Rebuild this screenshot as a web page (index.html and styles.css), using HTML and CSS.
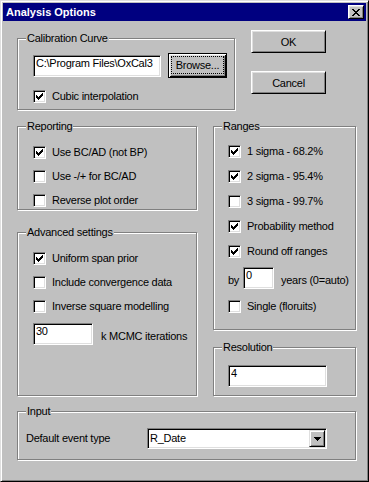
FILE: index.html
```html
<!DOCTYPE html>
<html>
<head>
    <title>Analysis Options</title>
    <meta charset="UTF-8">
    <meta name="viewport" content="width=device-width, initial-scale=1.0">
    <link rel="stylesheet" href="styles.css">
</head>

<body>
<div class="window">

  <!-- Title bar -->
  <div class="titlebar">
    <span class="title">Analysis Options</span>
    <button class="close-button">
      <svg width="8" height="7" viewBox="0 0 8 7"><path d="M0 0h2v1h-2zM6 0h2v1h-2zM1 1h2v1h-2zM5 1h2v1h-2zM2 2h4v1h-4zM3 3h2v1h-2zM2 4h4v1h-4zM1 5h2v1h-2zM5 5h2v1h-2zM0 6h2v1h-2zM6 6h2v1h-2z"/></svg>
    </button>
  </div>

  <div class="client">

    <div class="top-row">
      <div class="group calib">
        <span class="group-label">Calibration Curve</span>
        <div class="file-row">
          <input class="edit file-edit" type="text" value="C:\Program Files\OxCal3">
          <button class="btn btn-default browse"><span class="focus">Browse...</span></button>
        </div>
        <div class="check-row">
          <span class="check"><svg width="7" height="7" viewBox="0 0 7 7"><path d="M6 0h1v1h-1zM5 1h2v1h-2zM0 2h1v1h-1zM4 2h3v1h-3zM0 3h2v1h-2zM3 3h3v1h-3zM0 4h5v1h-5zM1 5h3v1h-3zM2 6h1v1h-1z"/></svg></span>
          Cubic interpolation
        </div>
      </div>
      <div class="dialog-buttons">
        <button class="btn">OK</button>
        <button class="btn">Cancel</button>
      </div>
    </div>

    <div class="mid-row">
      <div class="col left-col">
        <div class="group reporting">
          <span class="group-label">Reporting</span>
          <div class="check-row">
            <span class="check"><svg width="7" height="7" viewBox="0 0 7 7"><path d="M6 0h1v1h-1zM5 1h2v1h-2zM0 2h1v1h-1zM4 2h3v1h-3zM0 3h2v1h-2zM3 3h3v1h-3zM0 4h5v1h-5zM1 5h3v1h-3zM2 6h1v1h-1z"/></svg></span>
            Use BC/AD (not BP)
          </div>
          <div class="check-row"><span class="check"></span>Use -/+ for BC/AD</div>
          <div class="check-row"><span class="check"></span>Reverse plot order</div>
        </div>

        <div class="group advanced">
          <span class="group-label">Advanced settings</span>
          <div class="check-row">
            <span class="check"><svg width="7" height="7" viewBox="0 0 7 7"><path d="M6 0h1v1h-1zM5 1h2v1h-2zM0 2h1v1h-1zM4 2h3v1h-3zM0 3h2v1h-2zM3 3h3v1h-3zM0 4h5v1h-5zM1 5h3v1h-3zM2 6h1v1h-1z"/></svg></span>
            Uniform span prior
          </div>
          <div class="check-row"><span class="check"></span>Include convergence data</div>
          <div class="check-row"><span class="check"></span>Inverse square modelling</div>
          <div class="field-row iter-row">
            <input class="edit iter-edit" type="text" value="30">
            <span class="iter-label">k MCMC iterations</span>
          </div>
        </div>
      </div>

      <div class="col right-col">
        <div class="group ranges">
          <span class="group-label">Ranges</span>
          <div class="check-row">
            <span class="check"><svg width="7" height="7" viewBox="0 0 7 7"><path d="M6 0h1v1h-1zM5 1h2v1h-2zM0 2h1v1h-1zM4 2h3v1h-3zM0 3h2v1h-2zM3 3h3v1h-3zM0 4h5v1h-5zM1 5h3v1h-3zM2 6h1v1h-1z"/></svg></span>
            1 sigma - 68.2%
          </div>
          <div class="check-row">
            <span class="check"><svg width="7" height="7" viewBox="0 0 7 7"><path d="M6 0h1v1h-1zM5 1h2v1h-2zM0 2h1v1h-1zM4 2h3v1h-3zM0 3h2v1h-2zM3 3h3v1h-3zM0 4h5v1h-5zM1 5h3v1h-3zM2 6h1v1h-1z"/></svg></span>
            2 sigma - 95.4%
          </div>
          <div class="check-row"><span class="check"></span>3 sigma - 99.7%</div>
          <div class="check-row">
            <span class="check"><svg width="7" height="7" viewBox="0 0 7 7"><path d="M6 0h1v1h-1zM5 1h2v1h-2zM0 2h1v1h-1zM4 2h3v1h-3zM0 3h2v1h-2zM3 3h3v1h-3zM0 4h5v1h-5zM1 5h3v1h-3zM2 6h1v1h-1z"/></svg></span>
            Probability method
          </div>
          <div class="check-row">
            <span class="check"><svg width="7" height="7" viewBox="0 0 7 7"><path d="M6 0h1v1h-1zM5 1h2v1h-2zM0 2h1v1h-1zM4 2h3v1h-3zM0 3h2v1h-2zM3 3h3v1h-3zM0 4h5v1h-5zM1 5h3v1h-3zM2 6h1v1h-1z"/></svg></span>
            Round off ranges
          </div>
          <div class="field-row by-row">
            <span class="by-label">by</span>
            <input class="edit by-edit" type="text" value="0">
            <span class="years-label">years (0=auto)</span>
          </div>
          <div class="check-row single-row"><span class="check"></span>Single (floruits)</div>
        </div>

        <div class="group resolution">
          <span class="group-label">Resolution</span>
          <input class="edit res-edit" type="text" value="4">
        </div>
      </div>
    </div>

    <div class="group input-group">
      <span class="group-label">Input</span>
      <span class="event-label">Default event type</span>
      <div class="combo">
        <span class="combo-text">R_Date</span>
        <span class="combo-button">
          <svg width="7" height="4" viewBox="0 0 7 4"><path d="M0 0h7v1h-1v1h-1v1h-1v1h-1v-1h-1v-1h-1v-1h-1z"/></svg>
        </span>
      </div>
    </div>

  </div>
</div>
</body>
</html>
```

FILE: styles.css
```css
/* Basic Reset */
* {
    box-sizing: border-box;
    margin: 0;
    padding: 0;
}

html, body {
    width: 369px;
    height: 482px;
    background-color: #c0c0c0;
    overflow: hidden;
}

body {
    font-family: 'Liberation Sans', Arial, sans-serif;
    font-size: 11px;
    letter-spacing: -0.25px;
    color: #000;
}

/* Window frame */
.window {
    width: 369px;
    height: 482px;
    border: 1px solid;
    border-color: #dfdfdf #000 #000 #dfdfdf;
    box-shadow: inset 1px 1px #fff, inset -1px -1px #808080;
    padding: 2px;
}

/* Title bar */
.titlebar {
    height: 18px;
    background-color: #000080;
    display: flex;
    align-items: center;
    justify-content: space-between;
    padding: 0 2px 0 3px;
}

.title {
    color: #fff;
    font-weight: bold;
    letter-spacing: 0;
    line-height: 13px;
}

.close-button {
    width: 16px;
    height: 14px;
    background-color: #c0c0c0;
    border: 1px solid;
    border-color: #fff #000 #000 #fff;
    box-shadow: inset 1px 1px #dfdfdf, inset -1px -1px #808080;
    display: flex;
    align-items: center;
    justify-content: center;
    padding: 0 1px 0 0;
}

.close-button svg {
    display: block;
}

/* Client area */
.client {
    padding: 9px 0 0 14px;
}

.top-row {
    display: flex;
    align-items: flex-start;
}

.mid-row {
    display: flex;
    gap: 16px;
    margin-top: 16px;
}

.col {
    display: flex;
    flex-direction: column;
}

.left-col {
    width: 180px;
    gap: 22px;
}

.right-col {
    width: 143px;
    gap: 17px;
}

/* Group boxes */
.group {
    position: relative;
    border: 1px solid #808080;
    box-shadow: inset 1px 1px #fff, 1px 1px #fff;
}

.group-label {
    position: absolute;
    top: -7px;
    left: 8px;
    padding: 0 1px;
    line-height: 13px;
    background-color: #c0c0c0;
}

.calib {
    width: 218px;
    height: 72px;
    margin-top: 8px;
    padding: 14px 0 0 15px;
}

.reporting {
    height: 84px;
    padding: 19px 0 0 15px;
}

.advanced {
    height: 164px;
    padding: 19px 0 0 15px;
}

.ranges {
    height: 204px;
    padding: 18px 0 0 14px;
}

.resolution {
    height: 49px;
    padding: 17px 0 0 14px;
}

.input-group {
    width: 339px;
    height: 49px;
    margin-top: 15px;
    padding: 16px 0 0 8px;
    display: flex;
    align-items: flex-start;
}

/* Buttons */
.btn {
    width: 75px;
    height: 23px;
    background-color: #c0c0c0;
    border: 1px solid;
    border-color: #fff #000 #000 #fff;
    box-shadow: inset 1px 1px #dfdfdf, inset -1px -1px #808080;
    font-family: inherit;
    font-size: 11px;
    letter-spacing: inherit;
    color: #000;
}

.dialog-buttons {
    display: flex;
    flex-direction: column;
    gap: 18px;
    margin-left: 16px;
}

.btn-default {
    border: 1px solid #000;
    box-shadow: inset 1px 1px #fff, inset -1px -1px #000, inset 2px 2px #dfdfdf, inset -2px -2px #808080;
    display: flex;
    align-items: center;
    justify-content: center;
}

.browse {
    width: 59px;
    height: 25px;
    margin-left: 7px;
}

.focus {
    width: 53px;
    height: 18px;
    border: 1px dotted #000;
    display: flex;
    align-items: center;
    justify-content: center;
    margin-top: -1px;
}

/* Edit boxes */
.edit {
    height: 22px;
    background-color: #fff;
    border: 1px solid;
    border-color: #808080 #fff #fff #808080;
    box-shadow: inset 1px 1px #000, inset -1px -1px #dfdfdf;
    font-family: inherit;
    font-size: 11px;
    letter-spacing: inherit;
    line-height: 13px;
    color: #000;
    padding: 0 1px 7px 2px;
    outline: none;
}

.file-row {
    display: flex;
    align-items: flex-start;
}

.file-edit {
    width: 128px;
    margin-top: 2px;
}

.iter-edit {
    width: 60px;
}

.by-edit {
    width: 31px;
}

.res-edit {
    width: 99px;
}

.field-row {
    display: flex;
    align-items: center;
}

.iter-row {
    margin-top: 10px;
}

.iter-label {
    margin-left: 8px;
    margin-top: 3px;
}

.by-row {
    margin-top: 9px;
}

.by-label {
    width: 15px;
    margin-top: 3px;
}

.years-label {
    margin-left: 7px;
    margin-top: 3px;
}

/* Checkboxes */
.check-row {
    display: flex;
    align-items: center;
    height: 13px;
    line-height: 13px;
    white-space: nowrap;
}

.check-row + .check-row {
    margin-top: 11px;
}

.ranges .check-row + .check-row {
    margin-top: 12px;
}

.calib .check-row {
    margin-top: 12px;
}

.ranges .single-row {
    margin-top: 11px;
}

.check {
    width: 13px;
    height: 13px;
    margin-right: 6px;
    background-color: #fff;
    border: 1px solid;
    border-color: #808080 #fff #fff #808080;
    box-shadow: inset 1px 1px #000, inset -1px -1px #dfdfdf;
    display: flex;
    align-items: center;
    justify-content: center;
    flex-shrink: 0;
}

.check svg {
    display: block;
}

/* Combo box */
.event-label {
    width: 121px;
    margin-top: 4px;
    line-height: 13px;
}

.combo {
    width: 180px;
    height: 21px;
    background-color: #fff;
    border: 1px solid;
    border-color: #808080 #fff #fff #808080;
    box-shadow: inset 1px 1px #000, inset -1px -1px #dfdfdf;
    padding: 1px;
    display: flex;
}

.combo-text {
    flex: 1;
    padding-left: 1px;
    line-height: 17px;
}

.combo-button {
    width: 16px;
    height: 17px;
    background-color: #c0c0c0;
    border: 1px solid;
    border-color: #dfdfdf #000 #000 #dfdfdf;
    box-shadow: inset 1px 1px #fff, inset -1px -1px #808080;
    display: flex;
    align-items: center;
    justify-content: center;
}

.combo-button svg {
    display: block;
}
```
